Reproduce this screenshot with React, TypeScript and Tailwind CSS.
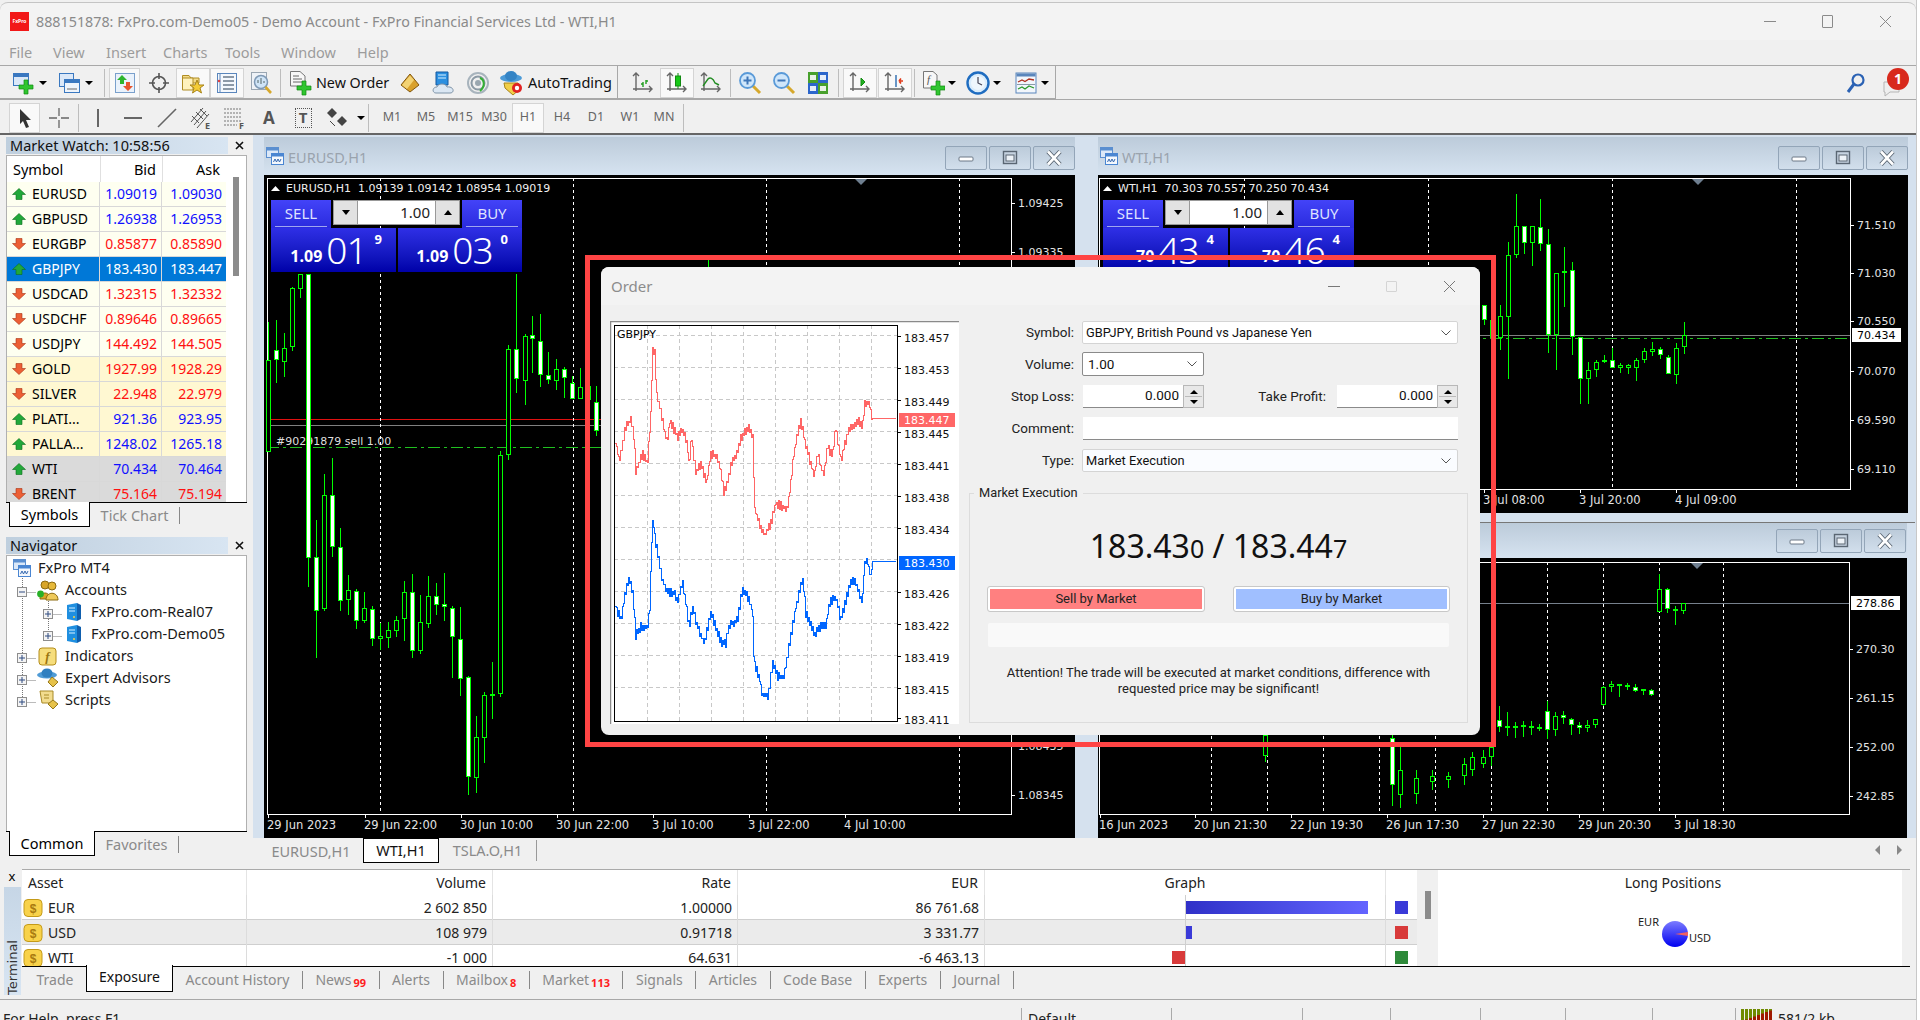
import React from "react";

type Cdl = [number, number, number, number, number, number];

const GREEN = "#00ff00";

// candles in page coordinates: x, wick top, body top, body bottom, wick bottom, white body
const EURUSD: Cdl[] = [
  [268, 322, 360, 452, 452, 0], [276, 320, 350, 360, 383, 1], [284, 333, 348, 362, 377, 0], [292, 287, 288, 347, 351, 0],
  [300, 274, 274, 289, 298, 0], [308, 274, 274, 558, 587, 1], [316, 520, 557, 611, 658, 1], [324, 474, 495, 609, 611, 0],
  [332, 458, 495, 547, 557, 1], [340, 528, 547, 601, 611, 1], [348, 575, 590, 600, 615, 0], [356, 589, 591, 621, 629, 1],
  [364, 592, 608, 621, 623, 0], [372, 606, 609, 639, 646, 1], [380, 623, 636, 639, 650, 0], [388, 622, 630, 638, 648, 0],
  [396, 616, 620, 631, 637, 0], [404, 581, 592, 619, 641, 0], [412, 574, 592, 651, 658, 1], [420, 595, 622, 651, 654, 0],
  [428, 576, 596, 624, 628, 0], [436, 583, 596, 605, 615, 1], [444, 573, 604, 607, 621, 1], [452, 606, 608, 637, 678, 1],
  [460, 607, 639, 679, 696, 1], [468, 676, 677, 777, 795, 1], [476, 716, 737, 778, 793, 0], [484, 692, 695, 738, 763, 0],
  [492, 662, 694, 696, 719, 0], [500, 451, 455, 694, 697, 0], [508, 345, 349, 455, 460, 0], [516, 274, 349, 379, 393, 1],
  [525, 334, 336, 381, 405, 0], [532, 316, 335, 339, 373, 1], [540, 314, 341, 375, 387, 1], [548, 352, 375, 380, 384, 1],
  [556, 359, 369, 381, 390, 0], [564, 367, 369, 378, 398, 1], [572, 376, 383, 399, 399, 1], [580, 368, 387, 399, 399, 0],
  [588, 386, 386, 400, 405, 0], [596, 386, 402, 431, 436, 1],
  [708, 255, 267, 290, 300, 0],
];

const WTI: Cdl[] = [
  [1484, 305, 305, 320, 325, 1], [1492, 320, 320, 338, 338, 0], [1500, 305, 316, 338, 350, 0], [1508, 242, 255, 317, 379, 0],
  [1516, 194, 226, 255, 258, 0], [1524, 226, 226, 243, 254, 1], [1532, 226, 226, 243, 266, 0], [1540, 199, 227, 244, 251, 1],
  [1548, 229, 244, 335, 353, 1], [1556, 273, 273, 335, 370, 0], [1564, 247, 271, 273, 307, 0], [1572, 262, 270, 337, 355, 1],
  [1580, 337, 337, 379, 404, 1], [1588, 362, 370, 379, 404, 0], [1596, 360, 362, 370, 377, 0], [1604, 355, 360, 362, 363, 0],
  [1612, 348, 360, 368, 368, 1], [1620, 363, 365, 368, 373, 0], [1628, 364, 365, 368, 374, 0], [1636, 358, 360, 368, 381, 0],
  [1644, 348, 351, 360, 363, 0], [1652, 342, 349, 352, 356, 0], [1660, 347, 349, 355, 359, 1], [1668, 355, 357, 374, 374, 1],
  [1676, 343, 348, 375, 384, 0], [1684, 322, 335, 347, 354, 0],
];

const TSLA: Cdl[] = [
  [1265, 735, 735, 756, 762, 0], [1392, 735, 738, 785, 806, 1], [1400, 745, 770, 795, 808, 0],
  [1416, 770, 778, 794, 804, 0], [1432, 770, 776, 782, 790, 0],
  [1448, 772, 776, 780, 788, 0], [1464, 758, 764, 776, 785, 0],
  [1472, 752, 757, 770, 776, 0], [1483, 750, 757, 764, 768, 0], [1491, 720, 747, 757, 766, 0], [1499, 706, 720, 727, 732, 1],
  [1507, 712, 726, 727, 736, 0], [1515, 722, 726, 727, 738, 0], [1523, 721, 725, 726, 737, 0], [1531, 721, 726, 727, 735, 0],
  [1539, 724, 727, 728, 731, 0], [1547, 701, 711, 730, 739, 1], [1555, 712, 716, 730, 736, 0], [1563, 711, 715, 718, 724, 1],
  [1571, 718, 719, 725, 735, 1], [1579, 722, 725, 728, 734, 1], [1587, 720, 725, 728, 732, 0], [1595, 719, 719, 725, 728, 0],
  [1603, 686, 687, 705, 706, 0], [1611, 681, 684, 687, 692, 0], [1619, 684, 684, 686, 697, 0], [1627, 683, 685, 687, 690, 0],
  [1635, 684, 687, 691, 692, 1], [1643, 689, 689, 691, 695, 0], [1651, 689, 690, 695, 696, 1], [1659, 574, 589, 612, 612, 0],
  [1667, 588, 589, 609, 613, 1], [1675, 606, 609, 611, 625, 0], [1683, 603, 603, 611, 614, 0],
];

const RED_KEYS = [[75,580],[85,630],[95,580],[105,530],[120,510],[130,560],[135,660],[145,640],[155,610],[170,640],[180,490],[185,305],[192,310],[198,440],[210,480],[220,540],[228,575],[238,510],[250,540],[262,560],[275,540],[290,580],[295,650],[302,560],[315,670],[330,640],[347,700],[360,610],[375,620],[385,640],[400,730],[420,650],[440,600],[450,565],[472,530],[488,570],[490,770],[505,820],[522,855],[540,820],[555,760],[575,770],[590,775],[600,700],[605,640],[615,580],[630,510],[645,590],[660,640],[670,680],[680,610],[690,650],[700,675],[710,590],[725,620],[735,530],[750,630],[770,550],[785,530],[800,510],[815,525],[822,455],[835,460],[845,505],[920,505]];
const BLUE_KEYS = [[75,1070],[90,1110],[105,1020],[115,990],[125,1020],[135,1155],[150,1130],[170,1130],[178,1060],[182,880],[187,810],[195,880],[205,930],[215,990],[230,1025],[250,1030],[262,1055],[275,990],[285,1060],[295,1130],[305,1070],[320,1130],[340,1180],[360,1090],[375,1130],[390,1175],[405,1180],[415,1125],[440,1110],[455,1015],[470,1040],[485,1080],[490,1240],[505,1280],[515,1335],[533,1335],[545,1240],[560,1280],[580,1280],[590,1215],[605,1130],[615,1070],[630,1010],[637,985],[645,1090],[660,1120],[670,1155],[690,1130],[705,1130],[715,1060],[735,1040],[750,1110],[770,1030],[785,985],[800,1010],[815,1060],[820,940],[830,935],[840,985],[845,935],[920,935]];

// tick line: interpolate the key points and zigzag between them
function tickPath(keys: number[][], seed: number) {
  let s = seed;
  const next = () => {
    s = (s * 1103515245 + 12345) & 0x7fffffff;
    return s / 0x7fffffff;
  };
  const pts = keys.map(([x, y]) => [590 + x / 3, 250 + y / 3]);
  const flatFrom = pts[pts.length - 2][0];
  let i = 0;
  let d = `M${pts[0][0]} ${pts[0][1]}`;
  let k = 0;
  for (let x = pts[0][0] + 1; x <= pts[pts.length - 1][0]; x += 1) {
    while (pts[i + 1][0] < x) i++;
    const t = (x - pts[i][0]) / (pts[i + 1][0] - pts[i][0]);
    let y = pts[i][1] + t * (pts[i + 1][1] - pts[i][1]);
    k++;
    if (x < flatFrom) y += (k % 2 === 0 ? 2.7 : -2.7) + (next() > 0.5 ? 1.3 : -1.3);
    else y = pts[pts.length - 1][1];
    d += `H${x.toFixed(1)}V${y.toFixed(1)}`;
  }
  return d;
}

function Candles({ data }: { data: Cdl[] }) {
  return (
    <g shapeRendering="crispEdges">
      {data.map(([x, wt, bt, bb, wb, f]) => (
        <g key={x}>
          <rect x={x} y={wt} width={1} height={wb - wt} fill={GREEN} />
          <rect x={x - 2} y={bt} width={5} height={Math.max(bb - bt, 2)} fill={GREEN} />
          {bb - bt > 2 && <rect x={x - 1} y={bt + 1} width={3} height={bb - bt - 2} fill={f ? "#fff" : "#000"} />}
        </g>
      ))}
    </g>
  );
}

function Plot({ l, t, r, b, grid, labels, dates, tri }: { l: number; t: number; r: number; b: number; grid: number[]; labels: [string, number][]; dates: [string, number][]; tri: number }) {
  return (
    <g>
      <g shapeRendering="crispEdges">
        {grid.map((x) => (
          <line key={x} x1={x + 0.5} x2={x + 0.5} y1={t} y2={b} stroke="#fff" strokeDasharray="3 3" />
        ))}
        <rect x={l + 0.5} y={t + 0.5} width={r - l} height={b - t} fill="none" stroke="#fff" />
        {labels.map(([, y]) => (
          <line key={y} x1={r} x2={r + 4} y1={y + 0.5} y2={y + 0.5} stroke="#fff" />
        ))}
        {dates.map(([s, x]) => (
          <line key={s} x1={x + 1.5} x2={x + 1.5} y1={b} y2={b + 4} stroke="#fff" />
        ))}
      </g>
      <polygon points={`${tri - 6},${t + 1} ${tri + 6},${t + 1} ${tri},${t + 7}`} fill="#6f7f90" />
      {labels.map(([s, y]) => (
        <text key={s} x={r + 7} y={y + 4} fill="#e4e4e4" fontSize={11}>{s}</text>
      ))}
      {dates.map(([s, x]) => (
        <text key={s} x={x} y={b + 15} fill="#e4e4e4" fontSize={11.5}>{s}</text>
      ))}
    </g>
  );
}

function WinIcon() {
  return (
    <svg width="18" height="18" viewBox="0 0 18 18">
      <rect x="0.5" y="0.5" width="12" height="10" fill="#dbe8f8" stroke="#5b8fd0" />
      <rect x="1" y="1" width="11" height="2.5" fill="#5b8fd0" />
      <rect x="5.5" y="6.5" width="12" height="11" fill="#f4f8fd" stroke="#4a86d2" />
      <rect x="6" y="7" width="11" height="2.5" fill="#4a86d2" />
      <path d="M7.5 15l1.5-3 1.5 3 1.5-3 1.5 3 1.5-3" fill="none" stroke="#3568b0" />
    </svg>
  );
}

function WinButtons() {
  return (
    <div className="flex gap-[2px]">
      {[0, 1, 2].map((k) => (
        <div key={k} className="flex h-[24px] w-[42px] items-center justify-center rounded-[2px] border border-[#93a5b8] bg-linear-to-b from-[#bccbda] to-[#d2dfec]">
          <svg width="20" height="18" viewBox="0 0 20 18">
            {k === 0 && <rect x="3" y="8" width="14" height="4" rx="1" fill="#fff" stroke="#6c7987" />}
            {k === 1 && (
              <g>
                <rect x="3.5" y="2.5" width="13" height="12" fill="#c6d3e0" stroke="#5a6673" strokeWidth="1.4" />
                <rect x="6" y="6" width="8" height="6" fill="#eef3f8" stroke="#5a6673" />
              </g>
            )}
            {k === 2 && (
              <g>
                <path d="M4 2.5L16 15.5M16 2.5L4 15.5" stroke="#5a6673" strokeWidth="4.4" />
                <path d="M4 2.5L16 15.5M16 2.5L4 15.5" stroke="#fff" strokeWidth="2.6" />
              </g>
            )}
          </svg>
        </div>
      ))}
    </div>
  );
}

function TradePanel({ bidPre, bidBig, bidSup, askPre, askBig, askSup, className }: { bidPre: string; bidBig: string; bidSup: string; askPre: string; askBig: string; askSup: string; className: string }) {
  const price = (pre: string, big: string, sup: string, w: string) => (
    <div className={`flex h-[44px] ${w} items-start justify-end bg-linear-to-b from-[#2f2fe6] to-[#0000a8] pr-[14px] text-white`}>
      <span className="mt-[16px] mr-[4px] text-[16px] font-bold leading-[24px]">{pre}</span>
      <span className="mt-[1px] mr-[8px] text-[37px] leading-[42px] font-light tracking-[-1px]">{big}</span>
      <span className="mt-[2px] text-[13px] font-bold leading-[18px]">{sup}</span>
    </div>
  );
  return (
    <div className={`absolute h-[72px] w-[251px] ${className}`}>
      <div className="flex h-[28px] items-start">
        <div className="h-[28px] w-[60px] bg-linear-to-b from-[#4343f8] to-[#2a2ade] px-[4px] text-center text-[15px] leading-[26px] text-[#dfe2ff]">
          <div className="border-b border-[#a0a6f0]">SELL</div>
        </div>
        <div className="mx-[2px] flex h-[25px] w-[127px] border border-[#999] bg-white text-[15px] leading-[23px] text-[#222]">
          <div className="flex w-[24px] items-center justify-center border-r border-[#999] bg-[#e2e2e2]">
            <span className="h-0 w-0 border-x-[4px] border-t-[5px] border-x-transparent border-t-black" />
          </div>
          <div className="flex-1 pr-[5px] text-right">1.00</div>
          <div className="flex w-[24px] items-center justify-center border-l border-[#999] bg-[#e2e2e2]">
            <span className="h-0 w-0 border-x-[4px] border-b-[5px] border-x-transparent border-b-black" />
          </div>
        </div>
        <div className="h-[28px] w-[60px] bg-linear-to-b from-[#4343f8] to-[#2a2ade] px-[4px] text-center text-[15px] leading-[26px] text-[#dfe2ff]">
          <div className="border-b border-[#a0a6f0]">BUY</div>
        </div>
      </div>
      <div className="flex gap-[2px]">
        {price(bidPre, bidBig, bidSup, "w-[125px]")}
        {price(askPre, askBig, askSup, "w-[124px]")}
      </div>
    </div>
  );
}

function ChartWindow({ title, w, h, black, children }: { title: string; w: string; h: string; black: string; children: React.ReactNode }) {
  return (
    <div className={`flex flex-col ${w} ${h} rounded-t-[3px] bg-[#d5e1ee]`}>
      <div className="flex h-[38px] shrink-0 items-center bg-linear-to-b from-[#bccbda] to-[#d6e3f0] pl-[2px]">
        <WinIcon />
        <span className="ml-[4px] mt-[3px] text-[14.5px] text-[#9aa3ad]">{title}</span>
        <div className="ml-auto mt-[3px]"><WinButtons /></div>
      </div>
      <div className={`relative overflow-hidden bg-black ${black}`}>{children}</div>
    </div>
  );
}

const AXIS = "block [font-family:'DejaVu_Sans',sans-serif]";

function Eurusd() {
  const ys = ["1.09425", "1.09335", "1.09245", "1.09155", "1.09065", "1.08975", "1.08885", "1.08795", "1.08705", "1.08615", "1.08525", "1.08435", "1.08345"];
  return (
    <>
      <svg width="811" height="663" viewBox="264 175 811 663" className={AXIS}>
        <rect x="267" y="419" width="744" height="1" fill="#e01010" />
        <rect x="267" y="425" width="744" height="1" fill="#808080" />
        <line x1="267" x2="1011" y1="447.5" y2="447.5" stroke="#20c020" strokeDasharray="12 4 3 4" />
        <text x="276" y="445" fill="#dfdfdf" fontSize={11}>#90291879 sell 1.00</text>
        <Plot l={267} t={178} r={1011} b={814} grid={[380, 573, 766, 959]} tri={861}
          labels={ys.map((s, i) => [s, 203 + i * 49.33] as [string, number])}
          dates={[["29 Jun 2023", 267], ["29 Jun 22:00", 364], ["30 Jun 10:00", 460], ["30 Jun 22:00", 556], ["3 Jul 10:00", 652], ["3 Jul 22:00", 748], ["4 Jul 10:00", 844]]} />
        <Candles data={EURUSD} />
        <polygon points="271,191 280,191 275.5,186" fill="#fff" />
        <text x="286" y="192" fill="#f0f0f0" fontSize={11} className="whitespace-pre">EURUSD,H1  1.09139 1.09142 1.08954 1.09019</text>
      </svg>
      <TradePanel className="left-[7px] top-[25px]" bidPre="1.09" bidBig="01" bidSup="9" askPre="1.09" askBig="03" askSup="0" />
    </>
  );
}

function Wti() {
  return (
    <>
      <svg width="810" height="338" viewBox="1098 175 810 338" className={AXIS}>
        <rect x="1099" y="335" width="751" height="1" fill="#808080" />
        <line x1="1099" x2="1850" y1="338.5" y2="338.5" stroke="#20c020" strokeDasharray="12 4 3 4" />
        <Plot l={1099} t={178} r={1850} b={489} grid={[1244, 1428, 1612, 1796]} tri={1698}
          labels={[["71.510", 225], ["71.030", 273], ["70.550", 321], ["70.070", 371], ["69.590", 420], ["69.110", 469]]}
          dates={[["3 Jul 08:00", 1483], ["3 Jul 20:00", 1579], ["4 Jul 09:00", 1675]]} />
        <Candles data={WTI} />
        <rect x="1852" y="328" width="49" height="14" fill="#fff" />
        <text x="1857" y="339" fill="#000" fontSize={11}>70.434</text>
        <polygon points="1103,191 1112,191 1107.5,186" fill="#fff" />
        <text x="1118" y="192" fill="#f0f0f0" fontSize={11} className="whitespace-pre">WTI,H1  70.303 70.557 70.250 70.434</text>
      </svg>
      <TradePanel className="left-[5px] top-[25px]" bidPre="70" bidBig="43" bidSup="4" askPre="70" askBig="46" askSup="4" />
    </>
  );
}

function Tsla() {
  return (
    <svg width="809" height="280" viewBox="1098 558 809 280" className={AXIS}>
      <rect x="1099" y="603" width="751" height="1" fill="#76808c" />
      <Plot l={1099} t={562} r={1849} b={814} grid={[1211, 1267, 1323, 1379, 1435, 1491, 1547, 1603, 1659, 1723]} tri={1697}
        labels={[["270.30", 649], ["261.15", 698], ["252.00", 747], ["242.85", 796]]}
        dates={[["16 Jun 2023", 1099], ["20 Jun 21:30", 1194], ["22 Jun 19:30", 1290], ["26 Jun 17:30", 1386], ["27 Jun 22:30", 1482], ["29 Jun 20:30", 1578], ["3 Jul 18:30", 1674]]} />
      <Candles data={TSLA} />
      <rect x="1851" y="596" width="49" height="14" fill="#fff" />
      <text x="1856" y="607" fill="#000" fontSize={11}>278.86</text>
    </svg>
  );
}

const ARROW = (up: boolean) => (
  <svg width="14" height="12" viewBox="0 0 14 12" className="shrink-0">
    {up ? (
      <path d="M7 0.5L13.5 6.5H10V11.5H4V6.5H0.5Z" fill="#22a83a" stroke="#0d6b1e" strokeWidth="0.6" />
    ) : (
      <path d="M7 11.5L13.5 5.5H10V0.5H4V5.5H0.5Z" fill="#ec5f35" stroke="#a83414" strokeWidth="0.6" />
    )}
  </svg>
);

const WATCH = [
  ["EURUSD", "1.09019", "1.09030", 1, "fx"], ["GBPUSD", "1.26938", "1.26953", 1, "fx"], ["EURGBP", "0.85877", "0.85890", 0, "fx"],
  ["GBPJPY", "183.430", "183.447", 1, "sel"], ["USDCAD", "1.32315", "1.32332", 0, "fx"], ["USDCHF", "0.89646", "0.89665", 0, "fx"],
  ["USDJPY", "144.492", "144.505", 0, "fx"], ["GOLD", "1927.99", "1928.29", 0, "mt"], ["SILVER", "22.948", "22.979", 0, "mt"],
  ["PLATI...", "921.36", "923.95", 1, "mt"], ["PALLA...", "1248.02", "1265.18", 1, "mt"], ["WTI", "70.434", "70.464", 1, "oil"],
  ["BRENT", "75.164", "75.194", 0, "oil"],
] as const;

function MarketWatch() {
  return (
    <div>
      <PanelHead title="Market Watch: 10:58:56" />
      <div className="ml-[6px] mt-[1px] flex h-[347px] w-[241px] overflow-hidden border-x border-t border-[#b0b0b0] bg-white">
        <div className="w-[219px] text-[14px] leading-[24px]">
          <div className="grid h-[26px] grid-cols-[94px_62px_63px] bg-white text-[14.5px] leading-[26px]">
            <div className="border-r border-[#e0e0e0] pl-[6px]">Symbol</div>
            <div className="border-r border-[#e0e0e0] pr-[6px] text-right">Bid</div>
            <div className="pr-[6px] text-right">Ask</div>
          </div>
          {WATCH.map(([sym, bid, ask, up, kind]) => {
            const bg = kind === "fx" ? "bg-[#fefff0]" : kind === "mt" ? "bg-[#fff8d2]" : kind === "oil" ? "bg-[#dadada]" : "bg-[#0078d7]";
            const px = kind === "sel" ? "text-white" : up ? "text-[#1010ff]" : "text-[#ff1010]";
            return (
              <div key={sym} className={`grid h-[25px] grid-cols-[93px_62px_64px] border-b border-[#d8d8d8] ${bg}`}>
                <div className={`flex items-center gap-[6px] border-r border-[#d8d8d8] pl-[5px] ${kind === "sel" ? "text-white" : ""}`}>
                  {ARROW(!!up)}<span>{sym}</span>
                </div>
                <div className={`border-r border-[#d8d8d8] pr-[4px] text-right ${px}`}>{bid}</div>
                <div className={`pr-[4px] text-right ${px}`}>{ask}</div>
              </div>
            );
          })}
        </div>
        <div className="flex-1 pl-[7px] pt-[21px]"><div className="h-[99px] w-[6px] bg-[#8c8c8c]" /></div>
      </div>
      <PanelTabs active="Symbols" activeW="w-[81px]" other="Tick Chart" otherW="w-[90px]" />
    </div>
  );
}

function PanelHead({ title }: { title: string }) {
  return (
    <div className="flex h-[17px] items-center">
      <div className="ml-[6px] h-[17px] w-[222px] bg-linear-to-r from-[#bfcfde] to-[#d8e5f2] pl-[4px] text-[14.5px] leading-[16px] text-[#111]">{title}</div>
      <svg width="9" height="9" viewBox="0 0 9 9" className="ml-[7px]"><path d="M1 1L8 8M8 1L1 8" stroke="#111" strokeWidth="1.6" /></svg>
    </div>
  );
}

function PanelTabs({ active, activeW, other, otherW }: { active: string; activeW: string; other: string; otherW: string }) {
  return (
    <div className="ml-[6px] flex h-[25px] w-[241px] border-t border-black text-[14.5px] leading-[22px]">
      <div className={`ml-[3px] ${activeW} -mt-px h-[25px] border-x border-b border-black bg-white pt-px text-center`}>{active}</div>
      <div className={`${otherW} my-[4px] h-[17px] border-r border-[#888] text-center leading-[17px] text-[#8a8a8a]`}>{other}</div>
    </div>
  );
}

function TreeGlyphs() {
  const box = (x: number, y: number, minus?: boolean) => (
    <g key={`${x}-${y}`}>
      <rect x={x - 4.5} y={y - 4.5} width="9" height="9" fill="#f4f4f4" stroke="#8d8d8d" />
      <path d={minus ? `M${x - 3} ${y}H${x + 3}` : `M${x - 3} ${y}H${x + 3}M${x} ${y - 3}V${y + 3}`} stroke="#2f4a80" />
    </g>
  );
  return (
    <svg width="70" height="160" viewBox="0 555 70 160" className="absolute left-0 top-0">
      <g stroke="#777" strokeDasharray="1 1" fill="none">
        <path d="M22.5 577V701M22.5 591.5H36M22.5 657.5H36M22.5 679.5H36M22.5 701.5H36" />
        <path d="M48.5 600V635M48.5 613.5H62M48.5 635.5H62" />
      </g>
      {box(22, 591, true)}{box(48, 613)}{box(48, 635)}{box(22, 657)}{box(22, 679)}{box(22, 701)}
    </svg>
  );
}

function ServerIcon() {
  return (
    <svg width="16" height="20" viewBox="0 0 16 20">
      <path d="M1 3L11 1V19L1 17Z" fill="#1f8fe0" />
      <path d="M11 1L15 3V17L11 19Z" fill="#0f5fae" />
      <path d="M3 6H9M3 9H9" stroke="#d5efff" strokeWidth="1.2" />
      <circle cx="8" cy="15" r="1" fill="#ffd23c" />
    </svg>
  );
}

function Navigator() {
  const rows = [
    { pl: "pl-[13px]", text: "FxPro MT4", icon: <WinIcon />, gap: "gap-[7px]" },
    { pl: "pl-[37px]", text: "Accounts", icon: (
      <svg width="22" height="21" viewBox="0 0 22 21"><circle cx="8" cy="5" r="4" fill="#d8a528" stroke="#8c6a10" /><circle cx="15" cy="6" r="4" fill="#e6b93a" stroke="#8c6a10" /><path d="M3 19C3 11 13 11 13 19Z" fill="#d8a528" stroke="#8c6a10" /><path d="M9 20C9 11 21 11 21 20Z" fill="#eec95a" stroke="#8c6a10" /><circle cx="3.5" cy="14" r="3.4" fill="#28b028" /></svg>
    ), gap: "gap-[6px]" },
    { pl: "pl-[66px]", text: "FxPro.com-Real07", icon: <ServerIcon />, gap: "gap-[9px]" },
    { pl: "pl-[66px]", text: "FxPro.com-Demo05", icon: <ServerIcon />, gap: "gap-[9px]" },
    { pl: "pl-[38px]", text: "Indicators", icon: (
      <svg width="19" height="19" viewBox="0 0 19 19"><rect x="1" y="1" width="17" height="17" rx="3" fill="#f6dd7c" stroke="#b48d1a" /><text x="9.5" y="14" textAnchor="middle" fontSize="13" fontStyle="italic" fontWeight="bold" fill="#9a7410" fontFamily="Liberation Serif">f</text></svg>
    ), gap: "gap-[8px]" },
    { pl: "pl-[37px]", text: "Expert Advisors", icon: (
      <svg width="22" height="20" viewBox="0 0 22 20"><ellipse cx="10" cy="7" rx="10" ry="3.5" fill="#4f9bd6" /><ellipse cx="10" cy="5" rx="5.5" ry="4.5" fill="#2f7fc0" /><path d="M15 9L21 14L16 19L11 14Z" fill="#e6c24a" stroke="#96781a" /></svg>
    ), gap: "gap-[6px]" },
    { pl: "pl-[38px]", text: "Scripts", icon: (
      <svg width="21" height="20" viewBox="0 0 21 20"><path d="M2 1H15V13H4Z" fill="#f2dc8e" stroke="#a98a26" /><path d="M15 10L20 14L15 19L10 14Z" fill="#e6c24a" stroke="#96781a" /><path d="M6 5H11M6 8H11" stroke="#a98a26" /></svg>
    ), gap: "gap-[6px]" },
  ];
  return (
    <div className="mt-[10px]">
      <PanelHead title="Navigator" />
      <div className="relative ml-[6px] mt-px h-[276px] w-[241px] overflow-hidden border-x border-t border-[#b0b0b0] bg-white">
        <div className="-ml-[7px] pt-[1px] text-[14.5px]">
          {rows.map((r) => (
            <div key={r.text} className={`flex h-[22px] items-center ${r.pl} ${r.gap} text-[#1a1a1a]`}>
              <span className="flex w-fit shrink-0 items-center">{r.icon}</span>
              <span>{r.text}</span>
            </div>
          ))}
        </div>
        <div className="absolute -left-[7px] top-0"><TreeGlyphs /></div>
      </div>
      <PanelTabs active="Common" activeW="w-[86px]" other="Favorites" otherW="w-[84px]" />
    </div>
  );
}

function Caret() {
  return <span className="block h-0 w-0 border-x-[4px] border-t-[4px] border-x-transparent border-t-black" />;
}

function Sep({ cls = "" }: { cls?: string }) {
  return <div className={`h-[28px] w-px shrink-0 bg-[#bdbdbd] ${cls}`} />;
}

function Btn({ children, w = "w-[34px]", on, cls = "" }: { children?: React.ReactNode; w?: string; on?: boolean; cls?: string }) {
  return (
    <div className={`flex h-[30px] shrink-0 items-center justify-center ${w} ${cls} ${on ? "border border-[#d4d4d4] bg-[#f9f9f9]" : ""}`}>{children}</div>
  );
}

function Drop({ children, cls = "w-[46px]" }: { children: React.ReactNode; cls?: string }) {
  return (
    <div className={`flex h-[30px] shrink-0 items-center ${cls}`}>
      <div className="flex w-[24px] justify-center">{children}</div>
      <div className="ml-[3px] flex items-center"><Caret /></div>
    </div>
  );
}

const Plus = (x: number, y: number) => (
  <path d={`M${x} ${y - 7}h4v5h5v4h-5v5h-4v-5h-5v-4h5z`} fill="#2fc52f" stroke="#128a12" strokeWidth="0.7" />
);

function Axes() {
  return <path d="M4 2V19M1 17H19M1 4L4 1L7 4M17 14L20 17L17 20" fill="none" stroke="#666" strokeWidth="1.4" />;
}

function ToolbarOne() {
  return (
    <div className="flex h-[34px] items-center border-t border-[#a8a8a8]">
      <div className="flex h-[33px] w-[1056px] shrink-0 items-center border-r border-b border-[#a8a8a8] pl-[12px] pt-[2px]">
        <Drop>
          <svg width="24" height="24" viewBox="0 0 24 24"><rect x="1.5" y="2.5" width="15" height="12" fill="#dbe8f8" stroke="#3a78c0" /><rect x="2" y="3" width="14" height="3" fill="#3a78c0" />{Plus(12, 16)}</svg>
        </Drop>
        <Drop>
          <svg width="24" height="24" viewBox="0 0 24 24"><rect x="1.5" y="2.5" width="14" height="13" fill="#dbe8f8" stroke="#3a78c0" /><rect x="6.5" y="8.5" width="15" height="13" fill="#eef4fb" stroke="#3a78c0" /><rect x="7" y="9" width="14" height="3" fill="#3a78c0" /><path d="M9 18H19" stroke="#666" /></svg>
        </Drop>
        <Sep />
        <Btn w="w-[31px]" on cls="ml-[4px]">
          <svg width="22" height="22" viewBox="0 0 22 22"><rect x="1.5" y="1.5" width="19" height="19" fill="#eaf2fb" stroke="#7aa0cc" /><path d="M8 3L13 8H10V12H6V8H3Z" fill="#2db52d" /><path d="M14 19L9 14H12V10H16V14H19Z" fill="#e8552d" /></svg>
        </Btn>
        <Btn cls="ml-[2px]">
          <svg width="22" height="22" viewBox="0 0 22 22" fill="none" stroke="#555" strokeWidth="1.6"><circle cx="11" cy="11" r="6.5" /><path d="M11 1V7M11 15V21M1 11H7M15 11H21" /></svg>
        </Btn>
        <Btn on>
          <svg width="24" height="24" viewBox="0 0 24 24"><path d="M1.5 4.5H8L10 7H18V12H1.5Z" fill="#f4dc8a" stroke="#b08d24" /><path d="M1.5 7H12V19H1.5Z" fill="#fff2bd" stroke="#b08d24" /><path d="M16 9L18 14H23L19 17L20.5 22L16 19L11.5 22L13 17L9 14H14Z" fill="#f4cc36" stroke="#a8841a" /></svg>
        </Btn>
        <Btn on>
          <svg width="22" height="22" viewBox="0 0 22 22"><rect x="1.5" y="1.5" width="19" height="19" fill="#f4f8fd" stroke="#5a86bc" /><path d="M4 1.5V20.5" stroke="#5a86bc" /><path d="M7 5H18M7 9H18M7 13H18M7 17H18" stroke="#6a7a8a" strokeWidth="1.3" /><circle cx="3" cy="9" r="1.3" fill="#e04444" /></svg>
        </Btn>
        <Btn>
          <svg width="24" height="24" viewBox="0 0 24 24"><rect x="2.5" y="1.5" width="15" height="17" fill="#eef2f7" stroke="#9aa6b2" /><circle cx="12" cy="11" r="6.5" fill="#cfe4f7" stroke="#7f99b5" strokeWidth="1.5" /><path d="M9 9V12M12 7V13M15 10V12" stroke="#566" /><path d="M16.5 16L22 22" stroke="#d6a82c" strokeWidth="2.6" /></svg>
        </Btn>
        <Sep cls="ml-[2px]" />
        <div className="flex h-[30px] w-[110px] shrink-0 items-center pl-[7px]">
          <svg width="24" height="26" viewBox="0 0 24 26"><path d="M2.5 1.5H12L17 6V16H2.5Z" fill="#f7f7f7" stroke="#777" /><path d="M5 6H11M5 9H14M5 12H14" stroke="#666" />{Plus(14, 18)}</svg>
          <span className="ml-[4px] whitespace-nowrap text-[14.3px] text-[#111]">New Order</span>
        </div>
        <Btn cls="ml-[2px]">
          <svg width="22" height="22" viewBox="0 0 22 22"><path d="M2 13L11 2L20 13L11 20Z" fill="#d9a12c" stroke="#82570e" /><path d="M3 13L11 3.5L15 8L8 17Z" fill="#f3d374" /></svg>
        </Btn>
        <Btn>
          <svg width="24" height="24" viewBox="0 0 24 24"><path d="M4 1H16V14H4Z" fill="#2b8fe0" stroke="#14599f" /><path d="M6 4H14M6 7H14" stroke="#d8f0ff" /><path d="M4 22C0 22 0 16 5 16C6 12 14 12 15 16C22 15 23 22 18 22Z" fill="#dbe7f3" stroke="#7f94a8" /></svg>
        </Btn>
        <Btn>
          <svg width="24" height="24" viewBox="0 0 24 24" fill="none"><circle cx="12" cy="12" r="10" stroke="#a8b4bd" strokeWidth="2" /><circle cx="12" cy="12" r="6.5" stroke="#8c9aa5" strokeWidth="2" /><circle cx="12" cy="12" r="3" fill="#9aa7b0" /><path d="M14 7C19 9 19 16 14 20" stroke="#33b033" strokeWidth="2" /></svg>
        </Btn>
        <Btn w="w-[33px]">
          <svg width="26" height="26" viewBox="0 0 26 26"><path d="M5 13L19 13L22 18L14 25L6 18Z" fill="#f2cf48" stroke="#a6841c" /><ellipse cx="12" cy="8" rx="11" ry="4" fill="#4c9bd8" /><ellipse cx="12" cy="6" rx="6" ry="5" fill="#3484c5" /><circle cx="18" cy="18" r="5" fill="#e02222" /><circle cx="18" cy="18" r="2.2" fill="#fff" /></svg>
        </Btn>
        <span className="whitespace-nowrap text-[14.5px] text-[#111]">AutoTrading</span>
        <div className="ml-[5px] mr-[8px] -mt-[2px] h-[33px] w-px shrink-0 bg-[#a8a8a8]" />
        <Btn>
          <svg width="22" height="22" viewBox="0 0 22 22"><Axes /><path d="M11 10V15M11 12H9M14 8V12M14 9H16" stroke="#1e9e1e" strokeWidth="1.4" fill="none" /></svg>
        </Btn>
        <Btn on>
          <svg width="22" height="24" viewBox="0 0 22 22"><Axes /><path d="M12 1V17" stroke="#128a12" /><rect x="9.5" y="4" width="5" height="10" fill="#16c916" stroke="#128a12" /></svg>
        </Btn>
        <Btn>
          <svg width="22" height="22" viewBox="0 0 22 22"><Axes /><path d="M3 14L8 7C10 5 13 6 15 11L19 13" stroke="#228c22" strokeWidth="1.4" fill="none" /></svg>
        </Btn>
        <Sep cls="ml-[2px]" />
        <Btn cls="ml-[2px]">
          <svg width="24" height="24" viewBox="0 0 24 24"><path d="M14 14L22 22" stroke="#d6a82c" strokeWidth="3" /><circle cx="9.5" cy="9.5" r="7.5" fill="#cfe6fa" stroke="#5a9ad8" strokeWidth="1.8" /><path d="M5.5 9.5H13.5M9.5 5.5V13.5" stroke="#3f76b8" strokeWidth="2" /></svg>
        </Btn>
        <Btn>
          <svg width="24" height="24" viewBox="0 0 24 24"><path d="M14 14L22 22" stroke="#d6a82c" strokeWidth="3" /><circle cx="9.5" cy="9.5" r="7.5" fill="#cfe6fa" stroke="#5a9ad8" strokeWidth="1.8" /><path d="M5.5 9.5H13.5" stroke="#3f76b8" strokeWidth="2" /></svg>
        </Btn>
        <Btn>
          <svg width="22" height="24" viewBox="0 0 22 24"><rect x="1" y="1" width="10" height="11" fill="#48a02c" /><rect x="11" y="1" width="10" height="11" fill="#2c66cc" /><rect x="1" y="12" width="10" height="11" fill="#2c66cc" /><rect x="11" y="12" width="10" height="11" fill="#48a02c" /><rect x="3" y="4" width="6" height="5" fill="#eaf2e6" /><rect x="13" y="4" width="6" height="5" fill="#e6eefa" /><rect x="3" y="15" width="6" height="5" fill="#e6eefa" /><rect x="13" y="15" width="6" height="5" fill="#eaf2e6" /></svg>
        </Btn>
        <Sep cls="ml-[3px]" />
        <Btn on cls="ml-[4px]">
          <svg width="22" height="22" viewBox="0 0 22 22"><Axes /><path d="M12 6V14L16 10Z" fill="#22b222" stroke="#128a12" /></svg>
        </Btn>
        <Btn on cls="ml-px">
          <svg width="22" height="22" viewBox="0 0 22 22"><Axes /><path d="M12 3V15" stroke="#2b6cb0" strokeWidth="1.4" /><path d="M19 9H15M15 9L17 6.5M15 9L17 11.5" stroke="#e03818" strokeWidth="1.6" fill="none" /></svg>
        </Btn>
        <Sep cls="ml-[2px]" />
        <Drop cls="ml-[6px] w-[45px]">
          <svg width="24" height="26" viewBox="0 0 24 26"><path d="M2.5 1.5H12L16 5V18H2.5Z" fill="#f7f7f7" stroke="#777" /><text x="6" y="13" fontSize="11" fontStyle="italic" fill="#555" fontFamily="Liberation Serif">f</text>{Plus(15, 18)}</svg>
        </Drop>
        <Drop cls="w-[48px]">
          <svg width="24" height="24" viewBox="0 0 24 24"><circle cx="12" cy="12" r="10.5" fill="#d9ecfb" stroke="#1e6cc0" strokeWidth="2.4" /><circle cx="12" cy="12" r="7" fill="#eef6fc" /><path d="M12 6V12L16 14" stroke="#445" strokeWidth="1.2" fill="none" /></svg>
        </Drop>
        <Drop cls="w-[42px]">
          <svg width="22" height="22" viewBox="0 0 22 22"><rect x="1" y="1" width="20" height="20" fill="#f2f6fb" stroke="#5a86bc" /><rect x="1.5" y="1.5" width="19" height="3" fill="#5a86bc" /><path d="M3 10L7 8L10 9.5L14 7L19 8" stroke="#b03020" strokeWidth="1.3" fill="none" /><path d="M3 17L7 15L10 17L14 14L19 16" stroke="#2c9a2c" strokeWidth="1.3" fill="none" /><path d="M2 12.5H20" stroke="#8a9aaa" /></svg>
        </Drop>
      </div>
      <div className="ml-auto mr-[5px] flex items-center gap-[15px]">
        <svg width="20" height="22" viewBox="0 0 20 22" fill="none"><circle cx="12" cy="8" r="5.5" stroke="#2b62b4" strokeWidth="2.2" /><path d="M8 12L2 20" stroke="#2b62b4" strokeWidth="3" /></svg>
        <div className="relative h-[30px] w-[30px]">
          <svg width="22" height="18" viewBox="0 0 22 18" className="absolute left-0 top-[12px]"><path d="M3 2H18V12H9L4 16V12H3Z" fill="#efefef" stroke="#b5b5b5" /></svg>
          <div className="absolute left-[6px] top-0 flex h-[22px] w-[22px] items-center justify-center rounded-full bg-[#d8291c] text-[14px] font-bold text-white">1</div>
        </div>
      </div>
    </div>
  );
}

function ToolbarTwo() {
  const tfs = ["M1", "M5", "M15", "M30", "H1", "H4", "D1", "W1", "MN"];
  return (
    <div className="flex h-[34px] items-center border-t border-[#a8a8a8] pl-[9px] pt-[2px]">
      <Btn w="w-[31px]" on>
        <svg width="16" height="20" viewBox="0 0 16 20"><path d="M3 1L14 12H9L12 19L9 20L6 13L3 16Z" fill="#333" /></svg>
      </Btn>
      <Btn cls="ml-[2px]">
        <svg width="22" height="22" viewBox="0 0 22 22"><path d="M11 1V9M11 13V21M1 11H9M13 11H21" stroke="#666" strokeWidth="1.3" /></svg>
      </Btn>
      <Sep cls="ml-[2px]" />
      <Btn cls="ml-[2px]"><div className="h-[18px] w-[2px] bg-[#666]" /></Btn>
      <Btn cls="ml-px"><div className="h-[2px] w-[18px] bg-[#666]" /></Btn>
      <Btn>
        <svg width="20" height="20" viewBox="0 0 20 20"><path d="M1 19L19 1" stroke="#666" strokeWidth="1.6" /></svg>
      </Btn>
      <Btn>
        <svg width="24" height="24" viewBox="0 0 24 24" fill="none" stroke="#555"><path d="M2 16L14 2M5 19L17 5M8 22L20 8" /><path d="M3 10L10 17M7 6L14 13M11 3L18 10" /><text x="16" y="23" fontSize="9" fontWeight="bold" fill="#555" stroke="none">E</text></svg>
      </Btn>
      <Btn>
        <svg width="24" height="24" viewBox="0 0 24 24" stroke="#777" strokeDasharray="2 1"><path d="M1 3H18M1 7H18M1 11H18M1 15H18M1 19H14" /><text x="16" y="23" fontSize="9" fontWeight="bold" fill="#555" stroke="none">F</text></svg>
      </Btn>
      <Btn><span className="text-[17px] font-bold leading-none text-[#555]">A</span></Btn>
      <Btn>
        <div className="flex h-[20px] w-[17px] items-center justify-center border border-dotted border-[#555] text-[15px] font-bold leading-none text-[#555]">T</div>
      </Btn>
      <Btn>
        <svg width="22" height="22" viewBox="0 0 22 22" fill="#444"><path d="M6 1L11 6L6 11L1 6Z" /><path d="M16 9L21 14L16 19L11 14Z" /><path d="M4 14L9 19" stroke="#444" /></svg>
      </Btn>
      <div className="flex w-[14px] justify-center"><Caret /></div>
      <Sep />
      <div className="ml-[6px] flex">
        {tfs.map((t) => (
          <Btn key={t} on={t === "H1"} w={t === "H1" ? "w-[32px]" : "w-[34px]"} cls={t === "H1" ? "mx-px" : ""}>
            <span className="text-[12.5px] text-[#666]">{t}</span>
          </Btn>
        ))}
      </div>
      <Sep cls="ml-[2px]" />
    </div>
  );
}

function ChevronDown() {
  return (
    <svg width="12" height="8" viewBox="0 0 12 8" fill="none" className="shrink-0"><path d="M1.5 1.5L6 6L10.5 1.5" stroke="#555" /></svg>
  );
}

function Spinner() {
  return (
    <div className="flex h-[23px] w-[21px] shrink-0 flex-col border border-[#b8b8b8] bg-[#e8e8e8] p-px">
      <div className="flex flex-1 items-center justify-center border-b border-[#bbb]"><span className="block h-0 w-0 border-x-[4px] border-b-[4px] border-x-transparent border-b-black" /></div>
      <div className="flex flex-1 items-center justify-center"><span className="block h-0 w-0 border-x-[4px] border-t-[4px] border-x-transparent border-t-black" /></div>
    </div>
  );
}

function MiniChart() {
  const h = [335, 367, 399, 431, 463, 495, 527, 559, 591, 623, 655, 687];
  const v = [647, 679, 711, 743, 775, 807, 839, 871];
  const labels: [string, number][] = [["183.457", 337], ["183.453", 369], ["183.449", 401], ["183.445", 433], ["183.441", 465], ["183.438", 497], ["183.434", 529], ["183.426", 593], ["183.422", 625], ["183.419", 657], ["183.415", 689], ["183.411", 719]];
  return (
    <svg width="349" height="403" viewBox="610 321 349 403" className={`${AXIS} shrink-0`}>
      <rect x="610" y="321" width="349" height="403" fill="#fff" />
      <path d="M610.5 724V321.5H959" fill="none" stroke="#8a8a8a" strokeWidth="1.5" />
      <g shapeRendering="crispEdges" stroke="#c8c8c8" strokeDasharray="4 3">
        {h.map((y) => <line key={y} x1="614" x2="897" y1={y + 0.5} y2={y + 0.5} />)}
        {v.map((x) => <line key={x} x1={x + 0.5} x2={x + 0.5} y1="325" y2="721" />)}
      </g>
      <path d={tickPath(RED_KEYS, 7)} fill="none" stroke="#ff6666" shapeRendering="crispEdges" />
      <path d={tickPath(BLUE_KEYS, 23)} fill="none" stroke="#0066ff" shapeRendering="crispEdges" />
      <rect x="614.5" y="325.5" width="283" height="396" fill="none" stroke="#000" shapeRendering="crispEdges" />
      <text x="617" y="338" fill="#000" fontSize={11}>GBPJPY</text>
      {labels.map(([s, y]) => (
        <g key={s}>
          <rect x="897" y={y - 1} width="4" height="1" fill="#000" />
          <text x="904" y={y + 5} fill="#111" fontSize={11}>{s}</text>
        </g>
      ))}
      <rect x="899" y="413" width="56" height="14" fill="#ff6666" />
      <text x="904" y="424" fill="#fff" fontSize={11}>183.447</text>
      <rect x="899" y="556" width="56" height="14" fill="#0066ff" />
      <text x="904" y="567" fill="#fff" fontSize={11}>183.430</text>
    </svg>
  );
}

function Label({ children, w = "w-[105px]" }: { children: React.ReactNode; w?: string }) {
  return <div className={`${w} shrink-0 text-right text-[13.5px] text-[#222]`}>{children}</div>;
}

function OrderDialog() {
  return (
    <div className="absolute left-[601px] top-[267px] h-[468px] w-[879px] overflow-hidden rounded-[8px] bg-[#f0f0f0]">
      <div className="flex h-[38px] items-center bg-[#f3f3f3] pl-[10px] text-[15px] text-[#8c8c8c]">
        <span>Order</span>
        <div className="ml-auto flex items-center">
          <div className="h-px w-[12px] bg-[#777]" />
          <div className="ml-[46px] h-[11px] w-[11px] rounded-[1px] border border-[#d4d4d4]" />
          <svg width="13" height="13" viewBox="0 0 13 13" className="ml-[46px] mr-[24px]"><path d="M1 1L12 12M12 1L1 12" stroke="#777" /></svg>
        </div>
      </div>
      <div className="flex pl-[9px] pt-[16px]">
        <MiniChart />
        <div className="ml-[10px] w-[499px] text-[12.8px] [font-family:Roboto,sans-serif]">
          <div className="flex h-[23px] items-center">
            <Label>Symbol:</Label>
            <div className="ml-[8px] flex h-[23px] w-[376px] items-center rounded-[2px] border border-[#d4d4d4] bg-white pl-[3px] pr-[5px] text-[#111]">
              <span>GBPJPY, British Pound vs Japanese Yen</span>
              <span className="ml-auto"><ChevronDown /></span>
            </div>
          </div>
          <div className="mt-[8px] flex h-[24px] items-center">
            <Label>Volume:</Label>
            <div className="ml-[8px] flex h-[24px] w-[122px] items-center rounded-[2px] border border-[#8a8a8a] bg-white pl-[5px] pr-[5px] text-[13.5px] text-[#111]">
              <span>1.00</span>
              <span className="ml-auto"><ChevronDown /></span>
            </div>
          </div>
          <div className="mt-[9px] flex h-[23px] items-center">
            <Label>Stop Loss:</Label>
            <div className="ml-[9px] h-[23px] w-[100px] border-b border-[#8a8a8a] bg-white pr-[4px] text-right text-[13.5px] leading-[20px] text-[#111]">0.000</div>
            <Spinner />
            <Label w="w-[122px]">Take Profit:</Label>
            <div className="ml-[11px] h-[23px] w-[100px] border-b border-[#8a8a8a] bg-white pr-[4px] text-right text-[13.5px] leading-[20px] text-[#111]">0.000</div>
            <Spinner />
          </div>
          <div className="mt-[9px] flex h-[23px] items-center">
            <Label>Comment:</Label>
            <div className="ml-[9px] h-[23px] w-[375px] border-b border-[#8a8a8a] bg-white" />
          </div>
          <div className="mt-[9px] flex h-[23px] items-center">
            <Label>Type:</Label>
            <div className="ml-[8px] flex h-[23px] w-[376px] items-center rounded-[2px] border border-[#d4d4d4] bg-[#fafcff] pl-[3px] pr-[5px] text-[#111]">
              <span>Market Execution</span>
              <span className="ml-auto"><ChevronDown /></span>
            </div>
          </div>
          <div className="relative mt-[21px] h-[230px] w-[499px] border border-[#dcdcdc]">
            <span className="absolute -top-[10px] left-[4px] bg-[#f0f0f0] px-[5px] leading-[18px] text-[#222]">Market Execution</span>
            <div className="mt-[34px] text-center text-[32px] leading-[36px] text-[#111] [font-family:'Noto_Sans',sans-serif]">
              183.43<span className="text-[25px]">0</span> / 183.44<span className="text-[25px]">7</span>
            </div>
            <div className="mx-[18px] mt-[21px] flex justify-between text-[13px]">
              <div className="flex h-[24px] w-[216px] items-center justify-center rounded-[2px] border-[2px] border-white bg-[#ff8080] text-[#222] outline outline-[#c8c8c8]">Sell by Market</div>
              <div className="flex h-[24px] w-[215px] items-center justify-center rounded-[2px] border-[2px] border-white bg-[#a0bfff] text-[#222] outline outline-[#c8c8c8]">Buy by Market</div>
            </div>
            <div className="mx-[18px] mt-[12px] h-[24px] rounded-[2px] bg-[#f9f9f9]" />
            <div className="mt-[18px] whitespace-nowrap text-center text-[13px] leading-[16px] text-[#222]">
              Attention! The trade will be executed at market conditions, difference with<br />requested price may be significant!
            </div>
          </div>
        </div>
      </div>
    </div>
  );
}

function Coin() {
  return (
    <svg width="20" height="20" viewBox="0 0 20 20"><rect x="1" y="1.5" width="18" height="17" rx="4" fill="#f8d24a" stroke="#c49a18" /><text x="10" y="15" textAnchor="middle" fontSize="12" fontWeight="bold" fill="#a87a10" fontFamily="Liberation Sans">$</text></svg>
  );
}

const EXPOSURE = [
  { a: "EUR", v: "2 602 850", r: "1.00000", e: "86 761.68", alt: false, swatch: "bg-[#3a3ad8]" },
  { a: "USD", v: "108 979", r: "0.91718", e: "3 331.77", alt: true, swatch: "bg-[#d83a3a]" },
  { a: "WTI", v: "-1 000", r: "64.631", e: "-6 463.13", alt: false, swatch: "bg-[#2e8a3a]" },
];

const TABS = ["Trade", "Exposure", "Account History", "News", "Alerts", "Mailbox", "Market", "Signals", "Articles", "Code Base", "Experts", "Journal"];
const TAB_BADGE: Record<string, string> = { News: "99", Mailbox: "8", Market: "113" };

function Terminal() {
  return (
    <div className="flex h-[134px] shrink-0 border-b border-[#a8a8a8] pt-[3px]">
      <div className="flex w-[22px] shrink-0 flex-col items-center pl-[2px]">
        <span className="h-[18px] text-[13px] leading-[14px]">x</span>
        <div className="flex h-[108px] w-[17px] items-end justify-center bg-linear-to-b from-[#c6d6e6] to-[#d8e5f2]">
          <span className="rotate-180 text-[13px] leading-[17px] text-[#333] [font-family:'DejaVu_Sans',sans-serif] [writing-mode:vertical-rl]">Terminal</span>
        </div>
      </div>
      <div className="w-[1888px]">
        <div className="flex h-[98px] overflow-hidden border-t border-b border-t-[#aaa] border-b-black bg-white text-[14px]">
          <div className="w-[1395px] shrink-0">
            <div className="grid h-[25px] grid-cols-[225px_246px_245px_247px_401px_31px] leading-[25px] text-[#222]">
              <div className="border-r border-[#e4e4e4] pl-[6px]">Asset</div>
              <div className="border-r border-[#e4e4e4] pr-[6px] text-right">Volume</div>
              <div className="border-r border-[#e4e4e4] pr-[6px] text-right">Rate</div>
              <div className="border-r border-[#e4e4e4] pr-[6px] text-right">EUR</div>
              <div className="border-r border-[#e4e4e4] text-center">Graph</div>
              <div />
            </div>
            {EXPOSURE.map((row) => (
              <div key={row.a} className={`grid h-[25px] grid-cols-[225px_246px_245px_247px_401px_31px] border-b border-[#cfcfcf] leading-[25px] text-[#222] ${row.alt ? "bg-[#ebebeb]" : "bg-white"}`}>
                <div className="flex items-center gap-[5px] border-r border-[#dcdcdc] pl-px"><Coin />{row.a}</div>
                <div className="border-r border-[#dcdcdc] pr-[5px] text-right">{row.v}</div>
                <div className="border-r border-[#dcdcdc] pr-[5px] text-right">{row.r}</div>
                <div className="border-r border-[#dcdcdc] pr-[5px] text-right">{row.e}</div>
                <div className="flex items-center border-r border-[#dcdcdc]">
                  <div className="flex h-full w-[200px] items-center justify-end">
                    {row.a === "WTI" && <div className="h-[13px] w-[13px] bg-[#d83a3a]" />}
                  </div>
                  <div className="flex h-full items-center border-l border-[#cfcfcf]">
                    {row.a === "EUR" && <div className="h-[13px] w-[182px] bg-linear-to-r from-[#3030c8] to-[#6464ff]" />}
                    {row.a === "USD" && <div className="h-[13px] w-[6px] bg-[#3a3ad8]" />}
                  </div>
                </div>
                <div className="flex items-center pl-[9px]"><div className={`h-[13px] w-[13px] ${row.swatch}`} /></div>
              </div>
            ))}
          </div>
          <div className="w-[21px] shrink-0 bg-[#f0f0f0] pl-[8px] pt-[21px]"><div className="h-[28px] w-[6px] bg-[#8c8c8c]" /></div>
          <div className="relative flex-1 pl-[6px]">
            <div className="text-center leading-[25px] text-[#222]">Long Positions</div>
            <svg width="100" height="40" viewBox="0 0 100 40" className="absolute left-[197px] top-[45px] [font-family:'Noto_Sans',sans-serif]">
              <defs>
                <linearGradient id="pie" x1="0" y1="0" x2="0" y2="1"><stop offset="0" stopColor="#7c7cff" /><stop offset="1" stopColor="#0000f0" /></linearGradient>
              </defs>
              <ellipse cx="40" cy="19" rx="13" ry="13" fill="url(#pie)" />
              <path d="M40 19L53 17L53 21Z" fill="#f06060" />
              <text x="3" y="11" fontSize="11" fill="#222">EUR</text>
              <text x="54" y="27" fontSize="11" fill="#222">USD</text>
            </svg>
          </div>
          <div className="w-[8px] shrink-0 bg-[#f0f0f0]" />
        </div>
        <div className="flex h-[26px] items-center text-[14px]">
          {TABS.map((t) => (
            t === "Exposure" ? (
              <div key={t} className="-mt-[3px] h-[27px] border-x border-b border-black bg-white px-[12px] leading-[24px] text-[#111]">{t}</div>
            ) : (
              <div key={t} className={`flex h-[18px] items-center px-[12.5px] leading-[18px] text-[#8a8a8a] ${t === "Trade" ? "" : "border-r border-[#888]"} ${t === "Trade" ? "ml-[2px]" : ""}`}>
                {t}
                {TAB_BADGE[t] && <span className="mt-[5px] ml-[2px] text-[11px] font-bold leading-[12px] text-[#ff2020]">{TAB_BADGE[t]}</span>}
              </div>
            )
          ))}
        </div>
      </div>
    </div>
  );
}

function StatusBar() {
  const cells = ["w-[150px]", "w-[131px]", "w-[88px]", "w-[90px]", "w-[85px]", "w-[87px]", "w-[83px]"];
  return (
    <div className="flex h-[20px] overflow-hidden pt-[8px] text-[14px] leading-[19px] text-[#222]">
      <div className="w-[1021px] shrink-0 pl-[3px] pt-px">For Help, press F1</div>
      {cells.map((c, i) => (
        <div key={c + i} className={`${c} shrink-0 border-l border-[#aaa] pl-[6px] pt-px`}>{i === 0 ? "Default" : ""}</div>
      ))}
      <div className="flex items-start gap-[5px] border-l border-[#aaa] pl-[5px] pt-px">
        <svg width="32" height="20" viewBox="0 0 32 20" className="shrink-0">
          {[0, 1, 2, 3, 4, 5, 6, 7].map((i) => (
            <g key={i}>
              <rect x={i * 4} y={0} width={3} height={20} fill="#6f8a00" />
              <rect x={i * 4} y={12 - i * 1.5} width={3} height={20} fill="#a01a00" />
            </g>
          ))}
        </svg>
        <span>581/2 kb</span>
      </div>
    </div>
  );
}

export default function App() {
  return (
    <div className="relative h-[1020px] w-[1920px] overflow-hidden bg-white text-black [font-family:'Noto_Sans',sans-serif]">
      <div className="flex h-[1020px] w-[1917px] flex-col border-r border-[#c8c8c8] bg-[#f0f0f0]">
        <div className="mt-[2px] flex h-[38px] shrink-0 items-center rounded-t-[8px] border-t border-[#c4c4c4] bg-[#f3f3f3] pl-[10px]">
          <div className="flex h-[19px] w-[19px] items-center justify-center bg-[#f21818] text-[5px] font-bold text-white">FxPro</div>
          <span className="ml-[7px] text-[14.3px] text-[#8a8a8a]">888151878: FxPro.com-Demo05 - Demo Account - FxPro Financial Services Ltd - WTI,H1</span>
          <div className="ml-auto flex items-center pr-[24px]">
            <div className="h-px w-[12px] bg-[#8a8a8a]" />
            <div className="ml-[46px] h-[13px] w-[11px] rounded-[1px] border border-[#8a8a8a]" />
            <svg width="13" height="13" viewBox="0 0 13 13" className="ml-[46px]"><path d="M1 1L12 12M12 1L1 12" stroke="#8a8a8a" /></svg>
          </div>
        </div>
        <div className="flex h-[25px] shrink-0 items-center pl-[9px] text-[14.5px] text-[#9c9c9c]">
          <span className="w-[44px]">File</span>
          <span className="w-[53px]">View</span>
          <span className="w-[57px]">Insert</span>
          <span className="w-[62px]">Charts</span>
          <span className="w-[56px]">Tools</span>
          <span className="w-[76px]">Window</span>
          <span>Help</span>
        </div>
        <ToolbarOne />
        <ToolbarTwo />
        <div className="h-[2px] shrink-0 bg-[#666]" />
        <div className="flex h-[731px] shrink-0">
          <div className="w-[253px] shrink-0 pt-[2px]">
            <MarketWatch />
            <Navigator />
          </div>
          <div className="flex w-[1664px] flex-col">
            <div className="flex h-[703px] gap-[5px] bg-[#d5e1ee] pt-[2px]">
              <ChartWindow title="EURUSD,H1" w="w-[831px] pl-[11px] pr-[9px]" h="h-[701px]" black="h-[663px] w-[811px]">
                <Eurusd />
              </ChartWindow>
              <div className="flex w-[826px] flex-col gap-[9px]">
                <ChartWindow title="WTI,H1" w="w-[826px] pl-[9px] pr-[7px]" h="h-[376px]" black="h-[338px] w-[810px]">
                  <Wti />
                </ChartWindow>
                <div className="flex h-[316px] flex-col border-t border-[#777] bg-[#d5e1ee] pl-[9px] pr-[8px]">
                  <div className="flex h-[35px] shrink-0 items-center justify-end bg-linear-to-b from-[#bccbda] to-[#d6e3f0] pr-[1px]"><WinButtons /></div>
                  <div className="h-[280px] overflow-hidden bg-black"><Tsla /></div>
                </div>
              </div>
            </div>
            <div className="flex h-[28px] items-start text-[14.5px] text-[#8a8a8a]">
              <div className="flex w-[110px] justify-center pl-[6px] pt-[3px]">EURUSD,H1</div>
              <div className="h-[25px] w-[76px] border-x border-b border-t border-black bg-white text-center leading-[23px] text-[#111]">WTI,H1</div>
              <div className="mt-[2px] h-[21px] w-[98px] border-r border-[#999] text-center leading-[21px]">TSLA.O,H1</div>
              <div className="ml-auto mr-[14px] mt-[7px] flex gap-[17px]">
                <span className="h-0 w-0 border-y-[5px] border-r-[5px] border-y-transparent border-r-[#888]" />
                <span className="h-0 w-0 border-y-[5px] border-l-[5px] border-y-transparent border-l-[#888]" />
              </div>
            </div>
          </div>
        </div>
        <Terminal />
        <StatusBar />
      </div>

      <OrderDialog />
      <div className="pointer-events-none absolute left-[585px] top-[255px] h-[492px] w-[911px] border-[5px] border-[#ff4444]" />
    </div>
  );
}
